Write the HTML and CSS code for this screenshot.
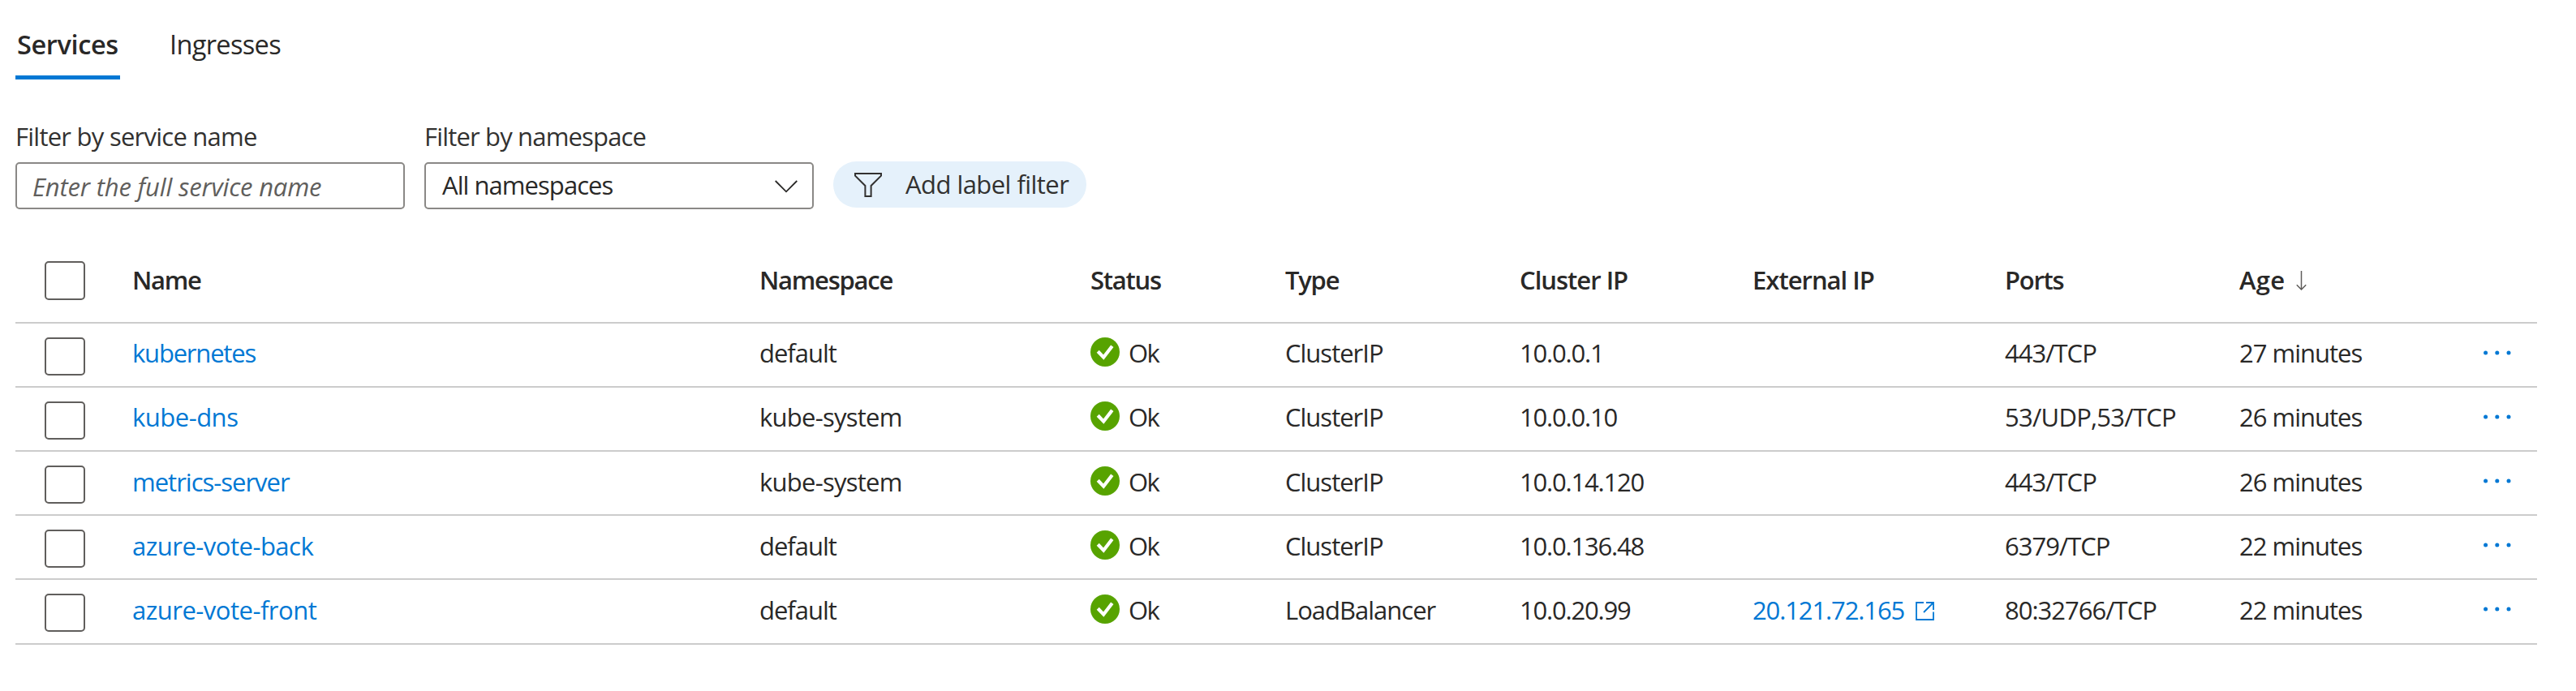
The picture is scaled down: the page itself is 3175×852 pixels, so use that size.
FILE: index.html
```html
<!DOCTYPE html>
<html lang="en">
<head>
<meta charset="utf-8">
<title>Services and ingresses</title>
<link rel="stylesheet" href="styles.css">
</head>
<body>
<svg class="sprite" aria-hidden="true">
  <symbol id="ok" viewBox="0 0 36 36"><circle cx="18" cy="18" r="18" fill="#57a300"/><path d="M9.2 17.2 16.2 24.6 26.8 10.8" fill="none" stroke="#fff" stroke-width="4.2"/></symbol>
  <symbol id="more" viewBox="0 0 34 6"><g fill="#0078d4"><circle cx="2.6" cy="3" r="2.5"/><circle cx="16.8" cy="3" r="2.5"/><circle cx="31" cy="3" r="2.5"/></g></symbol>
</svg>
<main class="page">
  <nav class="tabs">
    <a class="tab tab-active">Services</a>
    <a class="tab">Ingresses</a>
  </nav>

  <section class="filters">
    <label class="field">
      <span class="field-label">Filter by service name</span>
      <input class="box box-input" type="text" placeholder="Enter the full service name">
    </label>
    <div class="field">
      <span class="field-label ls-label">Filter by namespace</span>
      <div class="box box-select">
        <span>All namespaces</span>
        <svg class="chevron" viewBox="0 0 28 16"><path d="M.7 1 14 14.3 27.3 1" fill="none" stroke="#292827" stroke-width="1.8"/></svg>
      </div>
    </div>
    <button class="pill" type="button">
      <svg class="funnel" viewBox="0 0 34 30"><path d="M1 1H33V3.6L20.6 16V29H13.4V16L1 3.6Z" fill="none" stroke="#323130" stroke-width="2"/></svg>
      <span>Add label filter</span>
    </button>
  </section>

  <section class="table">
    <div class="row row-head">
      <i class="check"></i><span>Name</span><span>Namespace</span><span>Status</span><span>Type</span><span class="ls-ip">Cluster IP</span><span class="ls-ip">External IP</span><span>Ports</span>
      <span class="sort"><span class="age">Age</span><svg class="arrow" viewBox="0 0 13 24"><path d="M6.5 0V23M.8 17.2 6.5 23 12.2 17.2" fill="none" stroke="#605e5c" stroke-width="1.5"/></svg></span>
    </div>
    <div class="row">
      <i class="check"></i><a class="ls-tight">kubernetes</a><span>default</span><span class="status"><svg class="ok"><use href="#ok"/></svg><span class="ls-ok">Ok</span></span><span>ClusterIP</span><span class="ls-tight">10.0.0.1</span><span></span><span>443/TCP</span><span>27 minutes</span><svg class="more"><use href="#more"/></svg>
    </div>
    <div class="row">
      <i class="check"></i><a class="ls-wide">kube-dns</a><span class="ls-mid">kube-system</span><span class="status"><svg class="ok"><use href="#ok"/></svg><span class="ls-ok">Ok</span></span><span>ClusterIP</span><span class="ls-tight">10.0.0.10</span><span></span><span class="ls-mid">53/UDP,53/TCP</span><span>26 minutes</span><svg class="more"><use href="#more"/></svg>
    </div>
    <div class="row row-low">
      <i class="check"></i><a>metrics-server</a><span class="ls-mid">kube-system</span><span class="status"><svg class="ok"><use href="#ok"/></svg><span class="ls-ok">Ok</span></span><span>ClusterIP</span><span class="ls-tight">10.0.14.120</span><span></span><span>443/TCP</span><span>26 minutes</span><svg class="more"><use href="#more"/></svg>
    </div>
    <div class="row row-low">
      <i class="check"></i><a class="ls-wide">azure-vote-back</a><span>default</span><span class="status"><svg class="ok"><use href="#ok"/></svg><span class="ls-ok">Ok</span></span><span>ClusterIP</span><span class="ls-tight">10.0.136.48</span><span></span><span>6379/TCP</span><span>22 minutes</span><svg class="more"><use href="#more"/></svg>
    </div>
    <div class="row row-low row-last">
      <i class="check"></i><a class="ls-wide">azure-vote-front</a><span>default</span><span class="status"><svg class="ok"><use href="#ok"/></svg><span class="ls-ok">Ok</span></span><span>LoadBalancer</span><span class="ls-tight">10.0.20.99</span><a class="external"><span>20.121.72.165</span><svg class="open" viewBox="0 0 23 23"><path d="M10 1H1V22H22V12.5M13 1H22V10M22 1 10 13" fill="none" stroke="#0078d4" stroke-width="1.8"/></svg></a><span>80:32766/TCP</span><span>22 minutes</span><svg class="more"><use href="#more"/></svg>
    </div>
  </section>
</main>
</body>
</html>
```
FILE: styles.css
```css
* { box-sizing: border-box; }
body {
  margin: 0;
  background: #fff;
  color: #292827;
  font: 31px/40px "Open Sans", "Noto Sans", sans-serif;
}
svg { display: block; }
.sprite { position: absolute; width: 0; height: 0; }
.page { padding: 34px 47px 0 19px; }

.tabs { display: flex; gap: 59px; height: 64px; font-size: 32.5px; }
.tab { padding: 1px 0 0 2px; letter-spacing: -.66px; }
.tab-active {
  width: 129px;
  border-bottom: 5px solid #0078d4;
  font-weight: 600;
  letter-spacing: -.38px;
}

.filters { display: flex; align-items: flex-end; gap: 24px; margin-top: 50px; height: 110px; color: #323130; }
.field { display: flex; flex-direction: column; gap: 12px; width: 480px; }
.field-label { letter-spacing: -.75px; }
.ls-label { letter-spacing: -.83px; }
.box {
  width: 480px;
  height: 58px;
  border: 2px solid #8a8886;
  border-radius: 5px;
  background: #fff;
}
.box-input { padding: 2px 19px 0; font: inherit; outline: 0; }
.box-input::placeholder { color: #605e5c; opacity: 1; font-style: italic; letter-spacing: -.18px; }
.box-select {
  display: flex;
  justify-content: space-between;
  padding: 6px 18px 0 20px;
  color: #292827;
  letter-spacing: -.95px;
}
.chevron { width: 28px; height: 16px; margin-top: 14px; }
.pill {
  display: flex;
  gap: 29px;
  width: 312px;
  height: 57px;
  margin-bottom: 2px;
  padding: 8px 0 0 26px;
  border: 0;
  border-radius: 29px;
  background: #e5f1fb;
  color: #323130;
  font: inherit;
  letter-spacing: -.55px;
}
.funnel { width: 34px; height: 30px; margin-top: 6px; }

.table { margin-top: 42px; letter-spacing: -1px; }
.row {
  display: grid;
  grid-template-columns: 144px 773px 408px 240px 289px 287px 311px 289px 301px 66px;
  align-items: start;
  width: 3108px;
  height: 79px;
  padding-top: 16px;
  border-bottom: 2px solid #ccc;
  white-space: nowrap;
}
.row-head { height: 99px; padding-top: 25px; font-weight: 600; letter-spacing: -1.25px; }
.row-last { height: 80px; }
.row a { color: #0078d4; }
.row-low > span, .row-low > a { padding-top: 1px; }
.check {
  width: 50px;
  height: 47px;
  margin: 1px 0 0 36px;
  border: 2px solid #605e5c;
  border-radius: 5px;
}
.row-head .check { height: 48px; margin-top: -3px; }
.ls-tight { letter-spacing: -1.2px; }
.ls-ip { letter-spacing: -1px; }
.ls-mid { letter-spacing: -.75px; }
.ls-wide { letter-spacing: -.5px; }
.ls-ok { letter-spacing: -1.6px; }

.status { display: flex; gap: 11px; }
.ok { width: 36px; height: 36px; margin-top: 1px; }
.sort { display: flex; gap: 14px; }
.age { letter-spacing: .3px; }
.arrow { width: 13px; height: 24px; margin-top: 9px; }
.external { display: flex; gap: 14px; letter-spacing: -1.12px; }
.open { width: 23px; height: 23px; margin-top: 10px; }
.more { width: 34px; height: 6px; margin-top: 17px; }
```
